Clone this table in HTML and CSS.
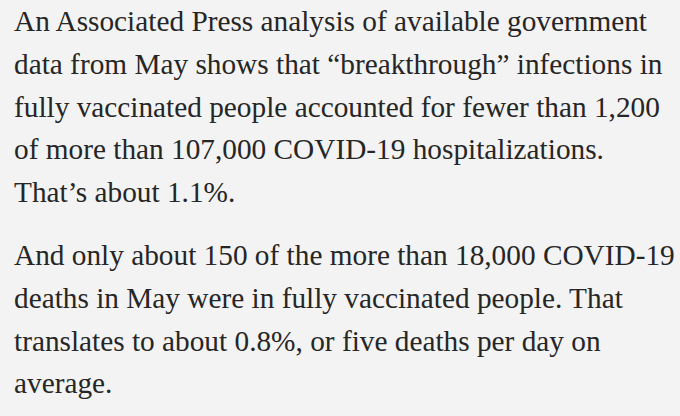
FILE: index.html
```html
<!DOCTYPE html>
<html>
<head>
<meta charset="utf-8">
<link rel="stylesheet" href="styles.css">
</head>
<body>
<article class="story">
<p class="para">An Associated Press analysis of available government<br>data from May shows that “breakthrough” infections in<br>fully vaccinated people accounted for fewer than 1,200<br>of more than 107,000 COVID-19 hospitalizations.<br>That’s about 1.1%.</p>
<p class="para">And only about 150 of the more than 18,000 COVID-19<br>deaths in May were in fully vaccinated people. That<br>translates to about 0.8%, or five deaths per day on<br>average.</p>
</article>
</body>
</html>
```
FILE: styles.css
```css
html, body {
  margin: 0;
  padding: 0;
  background: #f3f3f3;
}
.story {
  padding: 0 0 0 14px;
}
.para {
  margin: 0 0 20px 0;
  font-family: "Liberation Serif", serif;
  font-size: 29.3px;
  line-height: 42.8px;
  color: #262626;
  white-space: nowrap;
  font-variant-numeric: oldstyle-nums;
}
```
